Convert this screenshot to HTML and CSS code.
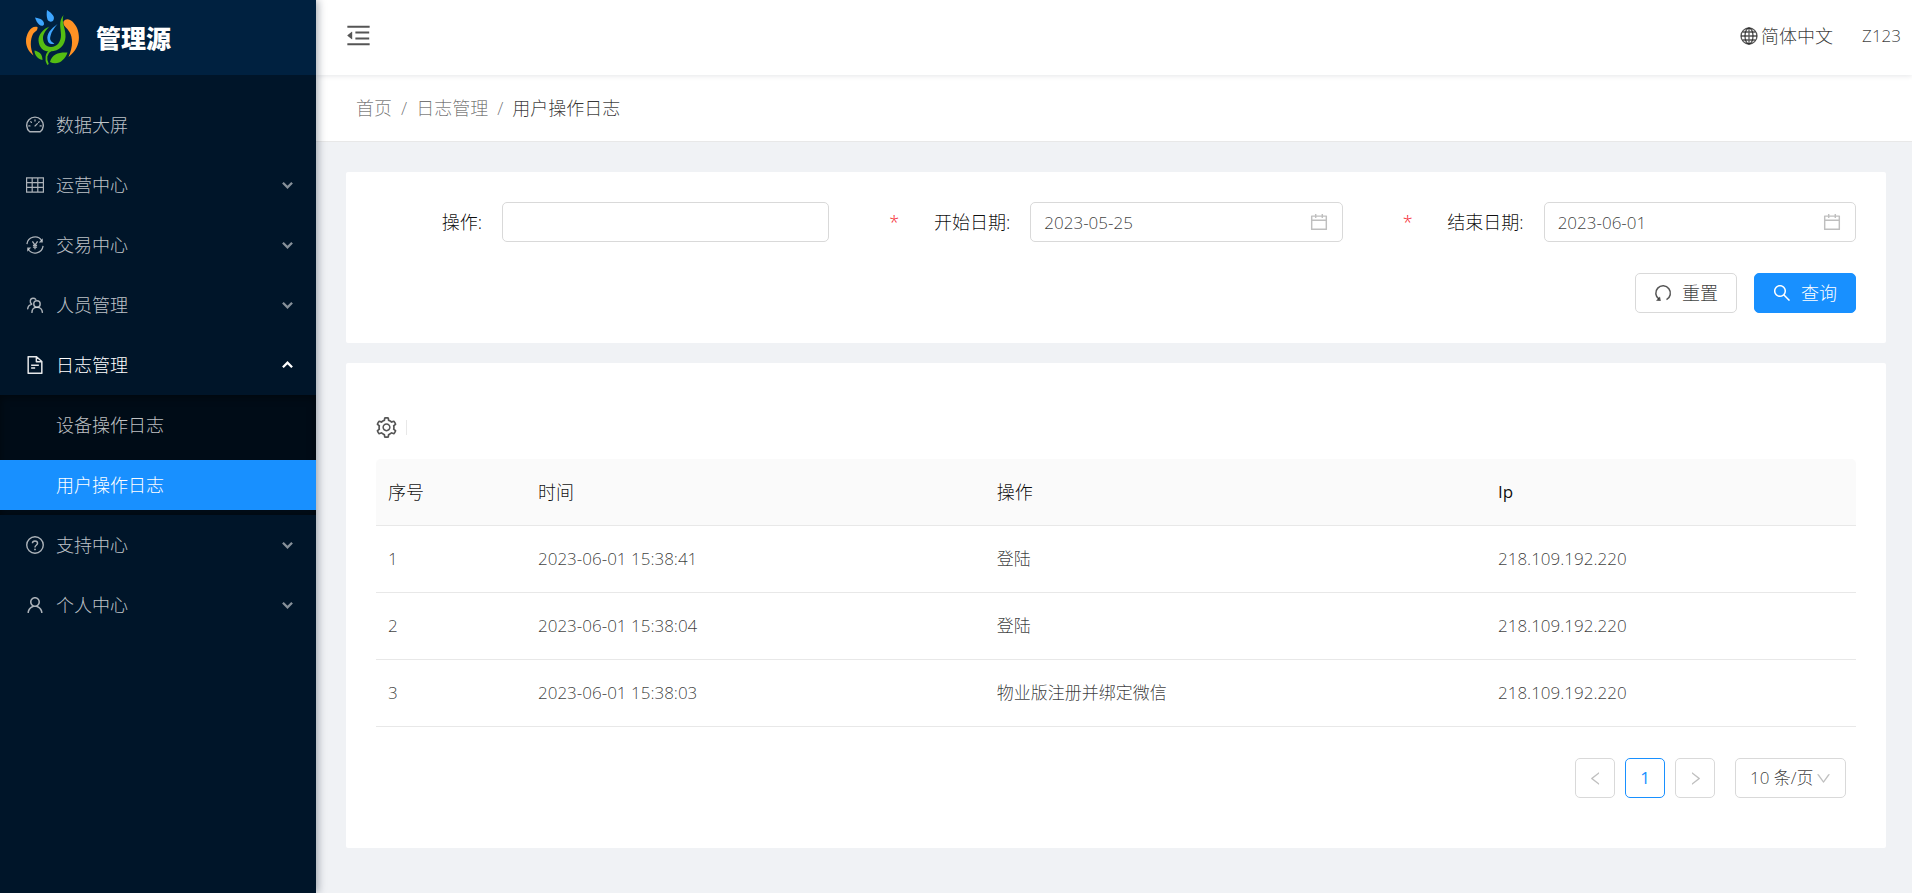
FILE: index.html
```html
<!DOCTYPE html>
<html lang="zh-CN">
<head>
<meta charset="utf-8">
<meta name="viewport" content="width=device-width, initial-scale=1">
<title>用户操作日志 - 管理源</title>
<link rel="stylesheet" href="styles.css">
</head>
<body>
<svg class="defs" aria-hidden="true">
  <symbol id="i-dashboard" viewBox="64 64 896 896"><g fill="none" stroke="currentColor" stroke-width="72" stroke-linecap="round" stroke-linejoin="round"><path d="M250 850A412 412 0 1 1 774 850Z"/><path stroke-width="60" d="M512 254v60M302 348l36 36M722 348l-36 36M200 556h62M762 556h62M512 560l120-120"/></g></symbol>
  <symbol id="i-table" viewBox="64 64 896 896"><path fill="none" stroke="currentColor" stroke-width="60" d="M94 162h836v700H94zM94 395h836M94 628h836M372 162v700M651 162v700"/></symbol>
  <symbol id="i-trade" viewBox="64 64 896 896"><g fill="none" stroke="currentColor" stroke-width="64"><path d="M110 470A404 404 0 0 1 850 300M914 554A404 404 0 0 1 174 724"/><path d="M384 330l128 190 128-190M512 520v200M408 530h208M408 620h208"/></g><path fill="currentColor" d="M900 180v210H700zM124 844V634h200z"/></symbol>
  <symbol id="i-team" viewBox="64 64 896 896"><g fill="none" stroke="currentColor" stroke-width="72" stroke-linecap="round"><circle cx="610" cy="460" r="160"/><path d="M360 880c0-150 100-250 250-250s260 100 270 250"/><path d="M350 470C230 380 260 180 410 172c60-2 110 20 140 60M150 700c10-110 80-190 190-220"/></g></symbol>
  <symbol id="i-file" viewBox="64 64 896 896"><path fill="none" stroke="currentColor" stroke-width="74" stroke-linejoin="round" d="M172 100h416l264 240v584H172zM580 100v248h264M320 520h384M320 660h200"/></symbol>
  <symbol id="i-question" viewBox="64 64 896 896"><g fill="none" stroke="currentColor" stroke-width="70"><circle cx="512" cy="512" r="412"/><path d="M384 430c0-70 55-120 128-120s128 50 128 118c0 90-128 100-128 190v16"/></g><circle cx="512" cy="732" r="44" fill="currentColor"/></symbol>
  <symbol id="i-user" viewBox="64 64 896 896"><path fill="currentColor" d="M858.500 763.600a374 374 0 0 0-80.600-119.500 375.630 375.630 0 0 0-119.500-80.600c-.4-.2-.8-.3-1.200-.5C719.500 518 760 444.700 760 362c0-137-111-248-248-248S264 225 264 362c0 82.700 40.500 156 102.800 201.100-.4.2-.8.3-1.200.5-44.800 18.900-85 46-119.500 80.600a375.630 375.630 0 0 0-80.600 119.500A371.700 371.700 0 0 0 136 901.800a8 8 0 0 0 8 8.200h60c4.400 0 7.900-3.500 8-7.800 2-77.200 33-149.500 87.800-204.300 56.700-56.700 132-87.900 212.200-87.900s155.500 31.200 212.200 87.900C779 752.700 810 825 812 902.200c.1 4.400 3.600 7.800 8 7.800h60a8 8 0 0 0 8-8.200c-1-47.800-10.900-94.300-29.500-138.200zM512 534c-45.900 0-89.100-17.900-121.600-50.400S340 407.900 340 362c0-45.900 17.900-89.100 50.400-121.600S466.100 190 512 190s89.100 17.900 121.600 50.400S684 316.100 684 362c0 45.900-17.900 89.100-50.400 121.600S557.900 534 512 534z"/></symbol>
  <symbol id="i-arrow" viewBox="0 0 12 8"><path fill="none" stroke="currentColor" stroke-width="2.500" d="M1 1.500l5 5 5-5"/></symbol>
  <symbol id="i-fold" viewBox="64 64 896 896"><path fill="currentColor" d="M408 442h480c4.400 0 8-3.600 8-8v-56c0-4.400-3.600-8-8-8H408c-4.400 0-8 3.600-8 8v56c0 4.400 3.600 8 8 8zm-8 204c0 4.400 3.600 8 8 8h480c4.400 0 8-3.600 8-8v-56c0-4.400-3.600-8-8-8H408c-4.400 0-8 3.600-8 8v56zm504-486H120c-4.400 0-8 3.600-8 8v56c0 4.400 3.600 8 8 8h784c4.400 0 8-3.600 8-8v-56c0-4.400-3.600-8-8-8zm0 632H120c-4.400 0-8 3.600-8 8v56c0 4.400 3.600 8 8 8h784c4.400 0 8-3.600 8-8v-56c0-4.400-3.600-8-8-8zM115.400 518.900L271.700 642c5.800 4.600 14.400.5 14.400-6.900V388.900c0-7.400-8.500-11.500-14.400-6.900L115.400 505.100a8.740 8.740 0 0 0 0 13.800z"/></symbol>
  <symbol id="i-globe" viewBox="0 0 18 18"><g fill="none" stroke="currentColor" stroke-width="1.300"><circle cx="9" cy="9" r="8"/><ellipse cx="9" cy="9" rx="4" ry="8"/><path d="M9 1v16M1 9h16M2.500 5h13M2.500 13h13"/></g></symbol>
  <symbol id="i-calendar" viewBox="64 64 896 896"><path fill="currentColor" d="M880 184H712v-64c0-4.400-3.600-8-8-8h-56c-4.400 0-8 3.600-8 8v64H384v-64c0-4.400-3.600-8-8-8h-56c-4.400 0-8 3.600-8 8v64H144c-17.700 0-32 14.300-32 32v664c0 17.700 14.300 32 32 32h736c17.700 0 32-14.300 32-32V216c0-17.700-14.300-32-32-32zm-40 656H184V460h656v380zM184 392V256h128v48c0 4.400 3.600 8 8 8h56c4.400 0 8-3.600 8-8v-48h256v48c0 4.400 3.600 8 8 8h56c4.400 0 8-3.600 8-8v-48h128v136H184z"/></symbol>
  <symbol id="i-reset" viewBox="0 0 18 18"><path fill="none" stroke="currentColor" stroke-width="1.500" d="M12.500 15.600A7.300 7.300 0 1 0 5 15.200"/><path fill="currentColor" d="M2 16.800l4.800.2-.8-4.400z"/></symbol>
  <symbol id="i-search" viewBox="64 64 896 896"><path fill="currentColor" d="M909.600 854.500L649.900 594.800C690.200 542.700 712 479 712 412c0-80.200-31.300-155.400-87.900-212.100-56.600-56.700-132-87.900-212.100-87.900s-155.500 31.300-212.100 87.900C143.200 256.500 112 331.800 112 412c0 80.100 31.300 155.500 87.900 212.100C256.500 680.800 331.800 712 412 712c67 0 130.600-21.800 182.700-62l259.700 259.600a8.200 8.200 0 0 0 11.600 0l43.600-43.500a8.200 8.200 0 0 0 0-11.600zM570.400 570.400C528 612.700 471.800 636 412 636s-116-23.300-158.400-65.600C211.300 528 188 471.800 188 412s23.300-116.100 65.600-158.400C296 211.300 352.200 188 412 188s116.100 23.200 158.400 65.600S636 352.200 636 412s-23.300 116.100-65.600 158.400z"/></symbol>
  <symbol id="i-setting" viewBox="64 64 896 896"><path fill="currentColor" d="M924.800 625.700l-65.500-56c3.100-19 4.700-38.400 4.700-57.800s-1.600-38.800-4.700-57.800l65.500-56a32.030 32.030 0 0 0 9.300-35.200l-.9-2.600a443.740 443.740 0 0 0-79.700-137.900l-1.800-2.100a32.120 32.120 0 0 0-35.100-9.500l-81.300 28.900c-30-24.600-63.500-44-99.700-57.600l-15.700-85a32.050 32.050 0 0 0-25.800-25.700l-2.700-.5c-52.100-9.400-106.900-9.400-159 0l-2.700.5a32.050 32.050 0 0 0-25.800 25.700l-15.800 85.400a351.860 351.860 0 0 0-99 57.400l-81.900-29.100a32 32 0 0 0-35.100 9.500l-1.800 2.100a446.020 446.020 0 0 0-79.700 137.900l-.9 2.600c-4.500 12.500-.8 26.500 9.300 35.200l66.300 56.600c-3.100 18.800-4.600 38-4.600 57.100 0 19.200 1.500 38.400 4.600 57.100L99 625.500a32.030 32.030 0 0 0-9.300 35.200l.9 2.600c18.100 50.400 44.900 96.900 79.700 137.900l1.800 2.100a32.120 32.120 0 0 0 35.100 9.500l81.900-29.100c29.800 24.500 63.100 43.900 99 57.400l15.800 85.400a32.050 32.050 0 0 0 25.800 25.700l2.700.5a449.400 449.400 0 0 0 159 0l2.700-.5a32.050 32.050 0 0 0 25.800-25.700l15.700-85a350 350 0 0 0 99.700-57.600l81.300 28.900a32 32 0 0 0 35.100-9.500l1.800-2.100c34.800-41.100 61.600-87.500 79.700-137.900l.9-2.600c4.500-12.300.8-26.300-9.300-35zM788.300 465.900c2.500 15.100 3.800 30.600 3.800 46.100s-1.300 31-3.800 46.100l-6.600 40.100 74.700 63.900a370.030 370.030 0 0 1-42.600 73.600L721 702.800l-31.400 25.800c-23.900 19.600-50.500 35-79.300 45.800l-38.100 14.300-17.900 97a377.500 377.500 0 0 1-85 0l-17.900-97.200-37.800-14.500c-28.500-10.800-55-26.200-78.700-45.700l-31.400-25.900-93.400 33.200c-17-22.900-31.200-47.600-42.600-73.600l75.500-64.500-6.500-40c-2.400-14.900-3.700-30.300-3.700-45.500 0-15.300 1.200-30.600 3.700-45.500l6.500-40-75.500-64.500c11.300-26.100 25.600-50.700 42.600-73.600l93.400 33.200 31.400-25.900c23.700-19.500 50.200-34.900 78.700-45.700l37.900-14.300 17.900-97.200c28.100-3.200 56.800-3.200 85 0l17.900 97 38.100 14.300c28.700 10.800 55.400 26.200 79.300 45.800l31.400 25.800 92.800-32.900c17 22.900 31.200 47.600 42.600 73.600L781.800 426l6.500 39.900zM512 326c-97.200 0-176 78.800-176 176s78.800 176 176 176 176-78.800 176-176-78.800-176-176-176zm79.200 255.200A111.600 111.600 0 0 1 512 614c-29.900 0-58-11.700-79.200-32.800A111.600 111.600 0 0 1 400 502c0-29.900 11.700-58 32.800-79.200C454 401.600 482.100 390 512 390c29.900 0 58 11.600 79.200 32.800A111.600 111.600 0 0 1 624 502c0 29.900-11.700 58-32.800 79.200z"/></symbol>
  <symbol id="i-left" viewBox="64 64 896 896"><path fill="currentColor" d="M724 218.300V141c0-6.700-7.700-10.400-12.900-6.300L260.300 486.800a31.860 31.860 0 0 0 0 50.300l450.800 352.100c5.300 4.100 12.900.4 12.900-6.300v-77.300c0-4.900-2.300-9.600-6.100-12.600l-360-281 360-281.100c3.800-3 6.100-7.700 6.100-12.600z"/></symbol>
  <symbol id="i-right" viewBox="64 64 896 896"><path fill="currentColor" d="M765.700 486.800L314.900 134.700A7.970 7.970 0 0 0 302 141v77.300c0 4.900 2.300 9.600 6.100 12.600l360 281.100-360 281.100c-3.900 3-6.100 7.700-6.100 12.600V883c0 6.700 7.700 10.400 12.900 6.300l450.800-352.100a31.960 31.960 0 0 0 0-50.400z"/></symbol>
  <symbol id="i-down" viewBox="64 64 896 896"><path fill="currentColor" d="M884 256h-75c-5.100 0-9.900 2.500-12.900 6.600L512 654.200 227.900 262.600c-3-4.100-7.800-6.600-12.900-6.600h-75c-6.500 0-10.300 7.400-6.500 12.700l352.600 486.100c12.800 17.600 39 17.600 51.700 0l352.600-486.100c3.900-5.300.1-12.700-6.400-12.700z"/></symbol>
</svg>

<div class="layout">
  <aside class="sider">
    <a class="brand" href="#">
      <svg class="brand-logo" viewBox="0 0 54 56" aria-hidden="true">
        <path fill="#ff9224" d="M11.500 17C5 15 0 24 0 31c0 6 3 11 7.500 14.500C4 38 4 30 7 24c2-3 5-3 4.500-7z"/>
        <path fill="#ff9224" d="M37.500 11.500C41 6 48 11 51 18c4 10 2 21-8.500 29 4-9 5-18 1-25-3-5-7-6-6-10.500z"/>
        <path fill="#3ea6ff" d="M9 7.500c6 1 9 3 9 6.500 0 2-3 2.500-5 .5-2-2-3-4-4-7z"/>
        <path fill="#3ea6ff" d="M21 0c6 4 8 7 6.500 10-1 2.500-5 2-6-.5-1-3-1-6-.5-9.500z"/>
        <path fill="#3ea6ff" d="M31.500 14c-7 5-11 10-10 15.500.5 4 3.500 5.500 7 4-4-2-5-4-4-7.500 1-5 4-8 7-12z"/>
        <path fill="#55bd12" d="M23.500 16.500c-7 3-11 8-11 14C13 38 18 42 24 41.500 34 41 39 35 39.500 27 40 18 35 13 37.500 5 32 12 35 18 35 25c0 7-4 12-10 12-5 0-8-4-8-9 0-4 3-8 6.500-11.500z"/>
        <path fill="#55bd12" d="M8.500 40.500c5 1 8 4 8 9.500-5-1-8-5-8-9.500zM24 52c2-8 9-10 17.500-9.500C39 50 32 56 24 52z"/>
        <path fill="none" stroke="#55bd12" stroke-width="1.800" d="M25 40c-5 3-6 9-3 14.500"/>
      </svg>
      <span>管理源</span>
    </a>
    <nav class="menu">
      <a class="menu-item" href="#"><svg class="icon"><use href="#i-dashboard"/></svg><span>数据大屏</span></a>
      <a class="menu-item" href="#"><svg class="icon"><use href="#i-table"/></svg><span>运营中心</span><svg class="arrow"><use href="#i-arrow"/></svg></a>
      <a class="menu-item" href="#"><svg class="icon"><use href="#i-trade"/></svg><span>交易中心</span><svg class="arrow"><use href="#i-arrow"/></svg></a>
      <a class="menu-item" href="#"><svg class="icon"><use href="#i-team"/></svg><span>人员管理</span><svg class="arrow"><use href="#i-arrow"/></svg></a>
      <a class="menu-item is-open" href="#"><svg class="icon"><use href="#i-file"/></svg><span>日志管理</span><svg class="arrow"><use href="#i-arrow"/></svg></a>
      <div class="submenu">
        <a class="menu-item submenu-item" href="#">设备操作日志</a>
        <a class="menu-item submenu-item is-selected" href="#">用户操作日志</a>
      </div>
      <a class="menu-item" href="#"><svg class="icon"><use href="#i-question"/></svg><span>支持中心</span><svg class="arrow"><use href="#i-arrow"/></svg></a>
      <a class="menu-item" href="#"><svg class="icon"><use href="#i-user"/></svg><span>个人中心</span><svg class="arrow"><use href="#i-arrow"/></svg></a>
    </nav>
  </aside>

  <div class="main">
    <header class="topbar">
      <button class="fold" type="button" aria-label="收起菜单"><svg><use href="#i-fold"/></svg></button>
      <div class="topbar-right">
        <button class="lang" type="button"><svg><use href="#i-globe"/></svg>简体中文</button>
        <a class="account" href="#">Z123</a>
      </div>
    </header>
    <nav class="breadcrumb" aria-label="面包屑">
      <a href="#">首页</a><span class="slash">/</span><a href="#">日志管理</a><span class="slash">/</span><span class="current">用户操作日志</span>
    </nav>

    <main class="content">
      <form class="card search">
        <div class="fields">
          <div class="field">
            <div class="field-label"><label for="op">操作:</label></div>
            <input class="control" id="op" type="text">
          </div>
          <div class="field field-date">
            <div class="field-label"><span class="required">*</span><label for="start">开始日期:</label></div>
            <div class="date"><input class="control" id="start" type="text" value="2023-05-25"><svg><use href="#i-calendar"/></svg></div>
          </div>
          <div class="field field-date">
            <div class="field-label"><span class="required">*</span><label for="end">结束日期:</label></div>
            <div class="date"><input class="control" id="end" type="text" value="2023-06-01"><svg><use href="#i-calendar"/></svg></div>
          </div>
        </div>
        <div class="actions">
          <button class="btn" type="reset"><svg><use href="#i-reset"/></svg>重置</button>
          <button class="btn btn-primary" type="button"><svg><use href="#i-search"/></svg>查询</button>
        </div>
      </form>

      <section class="card result">
        <div class="toolbar">
          <button class="setting" type="button" aria-label="列设置"><svg><use href="#i-setting"/></svg></button>
          <span class="divider"></span>
        </div>
        <table class="table">
          <colgroup><col class="col-no"><col class="col-time"><col><col class="col-ip"></colgroup>
          <thead><tr><th>序号</th><th>时间</th><th>操作</th><th class="latin">Ip</th></tr></thead>
          <tbody>
            <tr><td>1</td><td>2023-06-01 15:38:41</td><td>登陆</td><td>218.109.192.220</td></tr>
            <tr><td>2</td><td>2023-06-01 15:38:04</td><td>登陆</td><td>218.109.192.220</td></tr>
            <tr><td>3</td><td>2023-06-01 15:38:03</td><td>物业版注册并绑定微信</td><td>218.109.192.220</td></tr>
          </tbody>
        </table>
        <div class="pagination">
          <button class="page" type="button" aria-label="上一页" disabled><svg><use href="#i-left"/></svg></button>
          <button class="page is-current" type="button">1</button>
          <button class="page" type="button" aria-label="下一页" disabled><svg><use href="#i-right"/></svg></button>
          <div class="page-size">
            <select aria-label="每页条数"><option>10 条/页</option></select>
            <svg><use href="#i-down"/></svg>
          </div>
        </div>
      </section>
    </main>
  </div>
</div>
</body>
</html>
```
FILE: styles.css
```css
* { box-sizing: border-box; }

body {
  margin: 0;
  font: 300 18px/28px "Open Sans", "Noto Sans CJK SC", sans-serif;
  color: rgba(0, 0, 0, 0.78);
  background: #f0f2f5;
}

a { color: inherit; text-decoration: none; }
button, input, select { font: inherit; color: inherit; }
button { padding: 0; border: 0; background: none; }
svg { display: block; flex: none; }
.defs { position: absolute; width: 0; height: 0; }

.layout { display: flex; min-height: 100vh; }

/* Sidebar */
.sider {
  flex: 0 0 316px;
  z-index: 2;
  background: #001529;
  box-shadow: 2px 0 8px rgba(0, 21, 41, 0.35);
}
.brand {
  display: flex;
  align-items: center;
  gap: 16px;
  height: 75px;
  padding-left: 26px;
  background: #002140;
  color: #fff;
  font-size: 25px;
  font-weight: 900;
}
.brand-logo { width: 54px; height: 56px; }
.menu {
  display: flex;
  flex-direction: column;
  padding-top: 20px;
  color: rgba(255, 255, 255, 0.75);
}
.menu-item {
  display: flex;
  align-items: center;
  gap: 12px;
  height: 50px;
  margin: 5px 0;
  padding: 0 23px 0 26px;
}
.menu .icon { width: 18px; height: 18px; opacity: 0.9; }
.arrow { width: 11px; height: 8px; margin-left: auto; opacity: 0.7; }
.menu .is-open { color: #fff; }
.is-open .arrow { transform: rotate(180deg); opacity: 1; }
.submenu {
  display: flex;
  flex-direction: column;
  background: #000c17;
  box-shadow: inset 0 2px 8px rgba(0, 0, 0, 0.45);
}
.submenu-item { padding-left: 56px; }
.is-selected { background: #1890ff; color: #fff; }

/* Header */
.main { flex: 1; min-width: 0; }
.topbar {
  position: relative;
  display: flex;
  align-items: center;
  justify-content: space-between;
  height: 75px;
  padding: 0 11px 4px 30px;
  background: #fff;
  box-shadow: 0 1px 5px rgba(0, 21, 41, 0.1);
}
.fold svg { width: 25px; height: 25px; opacity: 0.85; }
.topbar-right { display: flex; align-items: center; gap: 29px; }
.lang { display: flex; align-items: center; gap: 3px; }
.lang svg { width: 18px; height: 18px; opacity: 0.85; }
.account { font-size: 17px; }
.breadcrumb {
  display: flex;
  align-items: center;
  gap: 9px;
  height: 67px;
  padding-left: 40px;
  background: #fff;
  border-bottom: 1px solid #e8e8e8;
  color: rgba(0, 0, 0, 0.55);
}
.breadcrumb .current { color: rgba(0, 0, 0, 0.78); }

/* Content */
.content { padding: 30px 26px 45px 30px; }
.card { background: #fff; border-radius: 2px; padding: 30px; }
.card + .card { margin-top: 20px; }

.fields { display: grid; grid-template-columns: repeat(3, minmax(0, 1fr)); gap: 60px; }
.field { display: grid; grid-template-columns: 126px minmax(0, 1fr); align-items: center; }
.field-date { grid-template-columns: 141px minmax(0, 1fr); }
.field-label {
  display: flex;
  align-items: center;
  padding-right: 20px;
  color: rgba(0, 0, 0, 0.95);
}
.field-label label { margin-left: auto; }
.required { color: #f5222d; }
.control {
  width: 100%;
  height: 40px;
  padding: 0 13px;
  border: 1px solid #d9d9d9;
  border-radius: 5px;
  background: #fff;
  font-size: 17px;
}
.date { position: relative; }
.date svg {
  position: absolute;
  top: 11px;
  right: 15px;
  width: 18px;
  height: 18px;
  color: rgba(0, 0, 0, 0.25);
}
.actions { display: flex; justify-content: flex-end; gap: 17px; margin-top: 31px; }
.btn {
  display: flex;
  align-items: center;
  justify-content: center;
  gap: 10px;
  width: 102px;
  height: 40px;
  border: 1px solid #d9d9d9;
  border-radius: 5px;
}
.btn svg { width: 18px; height: 18px; opacity: 0.85; }
.btn-primary { border-color: #1890ff; background: #1890ff; color: #fff; }
.btn-primary svg { opacity: 1; }

/* Table */
.result { padding-bottom: 50px; }
.toolbar { display: flex; align-items: center; gap: 9px; height: 66px; padding-top: 2px; }
.setting svg { width: 21px; height: 21px; opacity: 0.85; }
.divider { width: 1px; height: 15px; background: #e8e8e8; }
.table { width: 100%; table-layout: fixed; border-collapse: separate; border-spacing: 0; font-size: 17px; }
.col-no { width: 150px; }
.col-time { width: 31%; }
.col-ip { width: 25%; }
.table th, .table td {
  height: 67px;
  padding: 0 12px;
  border-bottom: 1px solid #e8e8e8;
  text-align: left;
}
.table th {
  background: #fafafa;
  color: rgba(0, 0, 0, 0.95);
  font-size: 18px;
  font-weight: 300;
}
.table th.latin { font-size: 17px; font-weight: 400; }
.table th:first-child { border-top-left-radius: 5px; }
.table th:last-child { border-top-right-radius: 5px; }

.pagination { display: flex; justify-content: flex-end; gap: 10px; padding: 31px 10px 0 0; font-size: 17px; }
.page {
  display: flex;
  align-items: center;
  justify-content: center;
  width: 40px;
  height: 40px;
  border: 1px solid #d9d9d9;
  border-radius: 5px;
  color: rgba(0, 0, 0, 0.25);
}
.page svg { width: 15px; height: 15px; }
.is-current { border-color: #1890ff; color: #1890ff; font-weight: 400; }
.page-size { position: relative; margin-left: 10px; }
.page-size select {
  width: 111px;
  height: 40px;
  padding: 0 14px;
  border: 1px solid #d9d9d9;
  border-radius: 5px;
  background: #fff;
  appearance: none;
}
.page-size svg {
  position: absolute;
  top: 13px;
  right: 15px;
  width: 15px;
  height: 15px;
  color: rgba(0, 0, 0, 0.25);
  pointer-events: none;
}
```
